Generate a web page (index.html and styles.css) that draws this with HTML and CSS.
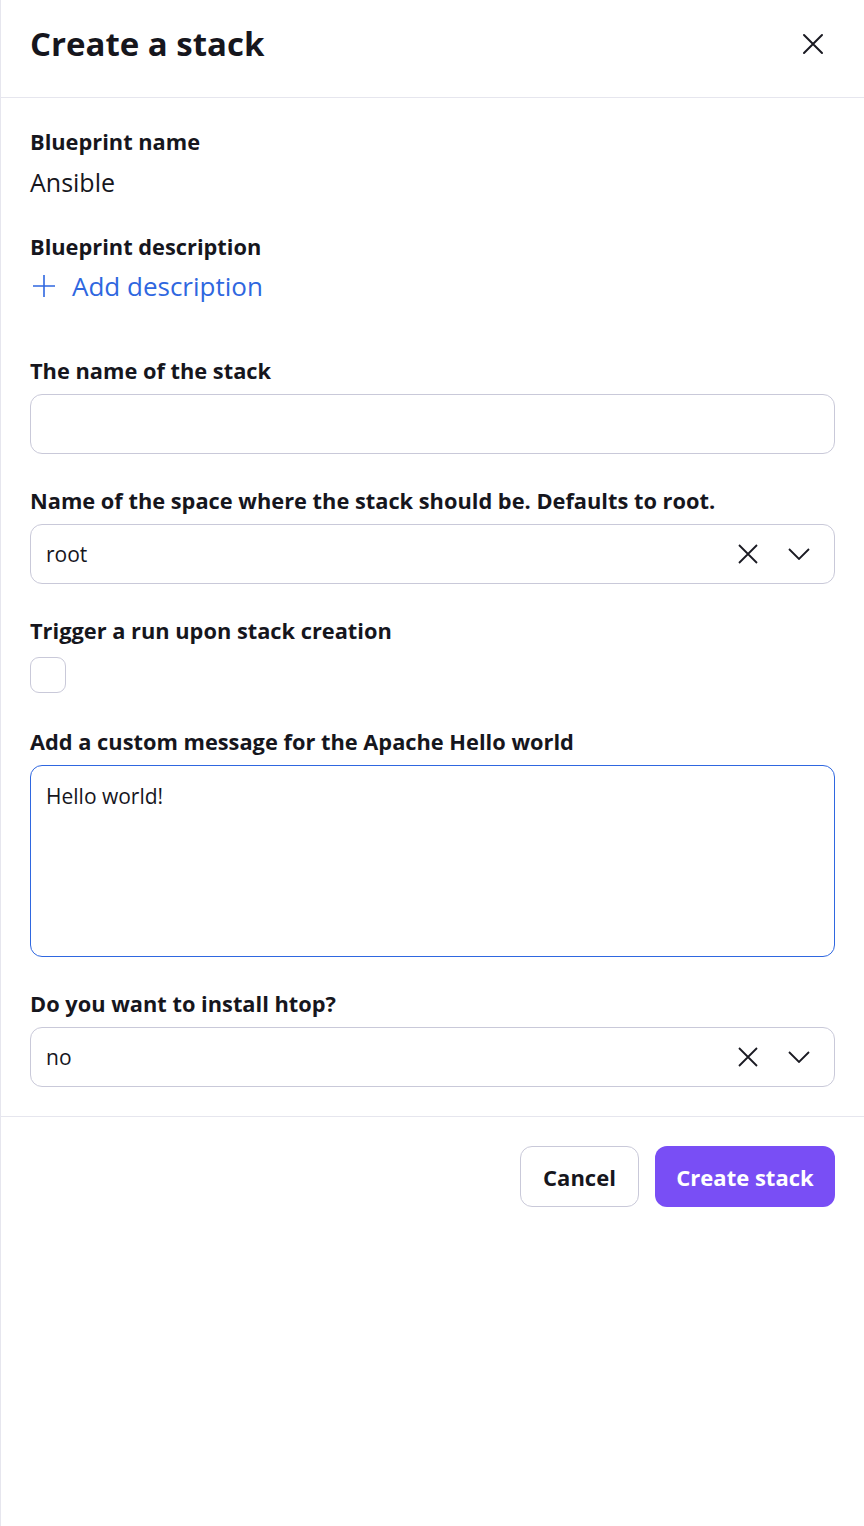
FILE: index.html
```html
<!DOCTYPE html>
<html>
<head>
<meta charset="utf-8">
<link rel="stylesheet" href="styles.css">
</head>
<body>
<div class="panel">
  <header class="header">
    <h1 class="title">Create a stack</h1>
    <button class="close" aria-label="Close">
      <svg width="22" height="22" viewBox="0 0 22 22"><path d="M2 2L20 20M20 2L2 20" stroke="#1a1a22" stroke-width="2" stroke-linecap="round"/></svg>
    </button>
  </header>
  <main class="body">
    <section class="info">
      <div class="label">Blueprint name</div>
      <div class="value">Ansible</div>
      <div class="label label-desc">Blueprint description</div>
      <a class="add-desc" href="#">
        <svg width="24" height="24" viewBox="0 0 24 24"><path d="M12 1V23M1 12H23" stroke="#2f67e0" stroke-width="1.6"/></svg>
        <span>Add description</span>
      </a>
    </section>

    <div class="field">
      <div class="label">The name of the stack</div>
      <div class="input"></div>
    </div>

    <div class="field">
      <div class="label">Name of the space where the stack should be. Defaults to root.</div>
      <div class="input select">
        <span class="sel-value">root</span>
        <span class="sel-icons">
          <svg width="22" height="22" viewBox="0 0 22 22"><path d="M2 2L20 20M20 2L2 20" stroke="#1a1a22" stroke-width="1.8"/></svg>
          <svg width="22" height="12" viewBox="0 0 22 12"><path d="M1 1L11 11L21 1" fill="none" stroke="#1a1a22" stroke-width="1.8"/></svg>
        </span>
      </div>
    </div>

    <div class="field">
      <div class="label">Trigger a run upon stack creation</div>
      <div class="checkbox"></div>
    </div>

    <div class="field">
      <div class="label">Add a custom message for the Apache Hello world</div>
      <div class="input textarea">Hello world!</div>
    </div>

    <div class="field">
      <div class="label">Do you want to install htop?</div>
      <div class="input select">
        <span class="sel-value">no</span>
        <span class="sel-icons">
          <svg width="22" height="22" viewBox="0 0 22 22"><path d="M2 2L20 20M20 2L2 20" stroke="#1a1a22" stroke-width="1.8"/></svg>
          <svg width="22" height="12" viewBox="0 0 22 12"><path d="M1 1L11 11L21 1" fill="none" stroke="#1a1a22" stroke-width="1.8"/></svg>
        </span>
      </div>
    </div>
  </main>
  <footer class="footer">
    <button class="btn btn-cancel">Cancel</button>
    <button class="btn btn-primary">Create stack</button>
  </footer>
</div>
</body>
</html>
```
FILE: styles.css
```css
* { box-sizing: border-box; }
html, body { margin: 0; padding: 0; background: #fff; }
body {
  font-family: "Open Sans", "Lato", sans-serif;
  color: #16161d;
}
.panel {
  width: 864px;
  min-height: 1526px;
  border-left: 1px solid #e6e6ee;
  background: #fff;
}
.header {
  height: 98px;
  border-bottom: 1px solid #e6e6ee;
  display: flex;
  align-items: center;
  justify-content: space-between;
  padding: 0 29px 10px 29px;
}
.title {
  margin: 0;
  font-size: 33px;
  font-weight: 700;
  letter-spacing: 0;
}
.close {
  background: none;
  border: 0;
  padding: 0;
  width: 22px;
  height: 22px;
  margin-right: 11px;
  display: flex;
}
.body {
  padding: 30px 29px 29px 29px;
  display: flex;
  flex-direction: column;
  gap: 33px;
}
.info { display: flex; flex-direction: column; }
.label {
  font-size: 21.8px;
  font-weight: 700;
  line-height: 28px;
  white-space: nowrap;
}
.value {
  font-size: 25px;
  line-height: 36px;
  margin-top: 8px;
}
.label-desc { margin-top: 33px; }
.add-desc {
  display: flex;
  align-items: center;
  gap: 16px;
  color: #2f67e0;
  text-decoration: none;
  font-size: 26px;
  line-height: 36px;
  margin-top: 7px;
  margin-left: 2px;
  margin-bottom: 20px;
}
.field { display: flex; flex-direction: column; gap: 9px; }
.input {
  height: 60px;
  border: 1px solid #c9c9d9;
  border-radius: 12px;
  background: #fff;
}
.select {
  display: flex;
  align-items: center;
  justify-content: space-between;
  padding: 0 24px 0 15px;
  font-size: 21px;
}
.sel-icons { display: flex; align-items: center; gap: 29px; }
.checkbox {
  width: 36px;
  height: 36px;
  border: 1px solid #c9c9d9;
  border-radius: 9px;
  margin-top: 3px;
  margin-bottom: 2px;
}
.textarea {
  height: 192px;
  border-color: #2f67e0;
  padding: 16px 15px;
  font-size: 21px;
  line-height: 28px;
}
.footer {
  border-top: 1px solid #e6e6ee;
  display: flex;
  justify-content: flex-end;
  gap: 16px;
  padding: 29px 29px;
}
.btn {
  height: 61px;
  border-radius: 12px;
  font-family: inherit;
  font-size: 22px;
  font-weight: 700;
  padding: 0;
  white-space: nowrap;
}
.btn-cancel {
  background: #fff;
  border: 1px solid #c9c9d9;
  color: #16161d;
  width: 119px;
}
.btn-primary {
  background: #794ef5;
  border: 0;
  color: #fff;
  width: 180px;
}
```
